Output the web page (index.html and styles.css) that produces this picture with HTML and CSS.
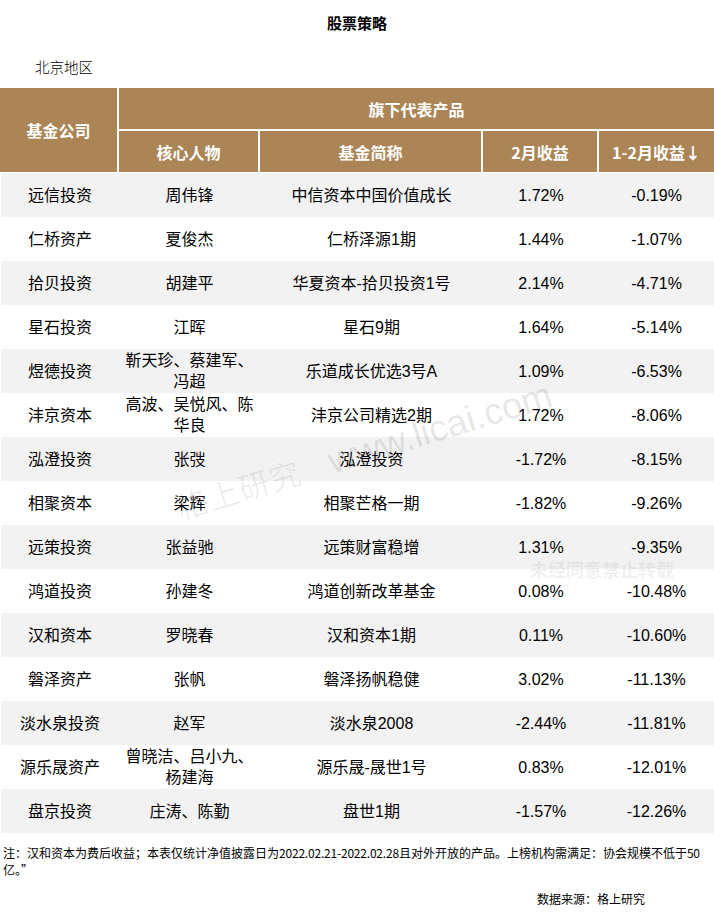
FILE: index.html
```html
<!DOCTYPE html>
<html lang="zh-CN">
<head>
<meta charset="utf-8">
<title>股票策略</title>
<link rel="stylesheet" href="styles.css">
</head>
<body>
<div class="page">
  <h1 class="title">股票策略</h1>
  <div class="region">北京地区</div>
  <table class="rank">
    <colgroup>
      <col class="c1"><col class="c2"><col class="c3"><col class="c4"><col class="c5">
    </colgroup>
    <thead>
      <tr class="h1">
        <th rowspan="2">基金公司</th>
        <th colspan="4" class="end">旗下代表产品</th>
      </tr>
      <tr class="h2">
        <th>核心人物</th>
        <th>基金简称</th>
        <th>2月收益</th>
        <th class="end">1-2月收益↓</th>
      </tr>
    </thead>
    <tbody>
      <tr><td>远信投资</td><td>周伟锋</td><td>中信资本中国价值成长</td><td>1.72%</td><td>-0.19%</td></tr>
      <tr><td>仁桥资产</td><td>夏俊杰</td><td>仁桥泽源1期</td><td>1.44%</td><td>-1.07%</td></tr>
      <tr><td>拾贝投资</td><td>胡建平</td><td>华夏资本-拾贝投资1号</td><td>2.14%</td><td>-4.71%</td></tr>
      <tr><td>星石投资</td><td>江晖</td><td>星石9期</td><td>1.64%</td><td>-5.14%</td></tr>
      <tr><td>煜德投资</td><td class="multi">靳天珍、蔡建军、<br>冯超</td><td>乐道成长优选3号A</td><td>1.09%</td><td>-6.53%</td></tr>
      <tr><td>沣京资本</td><td class="multi">高波、吴悦风、陈<br>华良</td><td>沣京公司精选2期</td><td>1.72%</td><td>-8.06%</td></tr>
      <tr><td>泓澄投资</td><td>张弢</td><td>泓澄投资</td><td>-1.72%</td><td>-8.15%</td></tr>
      <tr><td>相聚资本</td><td>梁辉</td><td>相聚芒格一期</td><td>-1.82%</td><td>-9.26%</td></tr>
      <tr><td>远策投资</td><td>张益驰</td><td>远策财富稳增</td><td>1.31%</td><td>-9.35%</td></tr>
      <tr><td>鸿道投资</td><td>孙建冬</td><td>鸿道创新改革基金</td><td>0.08%</td><td>-10.48%</td></tr>
      <tr><td>汉和资本</td><td>罗晓春</td><td>汉和资本1期</td><td>0.11%</td><td>-10.60%</td></tr>
      <tr><td>磐泽资产</td><td>张帆</td><td>磐泽扬帆稳健</td><td>3.02%</td><td>-11.13%</td></tr>
      <tr><td>淡水泉投资</td><td>赵军</td><td>淡水泉2008</td><td>-2.44%</td><td>-11.81%</td></tr>
      <tr><td>源乐晟资产</td><td class="multi">曾晓洁、吕小九、<br>杨建海</td><td>源乐晟-晟世1号</td><td>0.83%</td><td>-12.01%</td></tr>
      <tr><td>盘京投资</td><td>庄涛、陈勤</td><td>盘世1期</td><td>-1.57%</td><td>-12.26%</td></tr>
    </tbody>
  </table>
  <p class="note">注：汉和资本为费后收益；本表仅统计净值披露日为<span class="num">2022.02.21-2022.02.28</span>且对外开放的产品。上榜机构需满足：协会规模不低于<span class="num">50</span><br>亿。”</p>
  <p class="source">数据来源：格上研究</p>

  <div class="wm-main"><span class="wm-cn">格上研究</span><span class="wm-en">www.licai.com</span></div>
  <div class="wm-copy">未经同意禁止转载</div>
</div>
</body>
</html>
```
FILE: styles.css
```css
html, body {
  margin: 0;
  padding: 0;
  background: #ffffff;
}
body {
  font-family: "Liberation Sans", "Noto Sans CJK SC", sans-serif;
  color: #000000;
}
.page {
  position: relative;
  width: 714px;
  height: 921px;
  overflow: hidden;
}
.title {
  margin: 0;
  padding-top: 13px;
  height: 20px;
  line-height: 20px;
  font-size: 15px;
  font-weight: bold;
  text-align: center;
  font-family: "Noto Sans CJK SC", sans-serif;
}
.region {
  margin: 24px 0 0 35px;
  height: 20px;
  line-height: 20px;
  font-size: 14.5px;
  font-weight: 300;
  font-family: "Noto Sans CJK SC", sans-serif;
}
.rank {
  margin-top: 11px;
  width: 714px;
  border-collapse: separate;
  border-spacing: 0;
  table-layout: fixed;
  font-size: 16px;
}
.c1 { width: 119px; }
.c2 { width: 141px; }
.c3 { width: 223px; }
.c4 { width: 116px; }
.c5 { width: 115px; }
.rank th {
  background: #ab8555;
  color: #ffffff;
  font-weight: bold;
  font-family: "Noto Sans CJK SC", sans-serif;
  padding: 0;
  text-align: center;
  border-right: 2px solid #ffffff;
  border-bottom: 2px solid #ffffff;
}
.rank th.end { border-right: 0; }
.rank .h1 th { height: 41px; }
.rank .h2 th { height: 41px; border-bottom-width: 1px; }
.rank th[rowspan] { border-bottom-width: 1px; }
.rank td {
  height: 44px;
  padding: 0 5px;
  text-align: center;
  vertical-align: middle;
  white-space: nowrap;
  line-height: 21px;
  font-weight: 400;
}
.rank td.multi { padding: 0 2px; }
.rank tbody tr:nth-child(odd) td { background: #f2f2f2; }
.rank tbody tr td:first-child { border-left: 1px solid #ffffff; }
.note {
  margin: 11px 0 0 3px;
  font-size: 12px;
  line-height: 17px;
  white-space: nowrap;
  font-family: "Noto Sans CJK SC", sans-serif;
}
.note .num { letter-spacing: -0.2px; }
.source {
  margin: 13px 0 0 537px;
  font-size: 12px;
  line-height: 16px;
  font-family: "Noto Sans CJK SC", sans-serif;
}
.wm-main {
  position: absolute;
  left: 364px;
  top: 450px;
  transform: translate(-50%, -50%) rotate(-17deg);
  white-space: nowrap;
  color: rgba(0, 0, 0, 0.1);
  pointer-events: none;
}
.wm-cn {
  font-family: "Noto Sans CJK SC", sans-serif;
  font-size: 31px;
  font-weight: 300;
  letter-spacing: 1px;
  margin-right: 30px;
}
.wm-en {
  font-family: "Liberation Sans", sans-serif;
  font-size: 37px;
}
.wm-copy {
  position: absolute;
  left: 530px;
  top: 556px;
  font-family: "Noto Sans CJK SC", sans-serif;
  font-size: 18px;
  font-weight: bold;
  color: rgba(0, 0, 0, 0.06);
  filter: blur(0.6px);
  white-space: nowrap;
}
```
